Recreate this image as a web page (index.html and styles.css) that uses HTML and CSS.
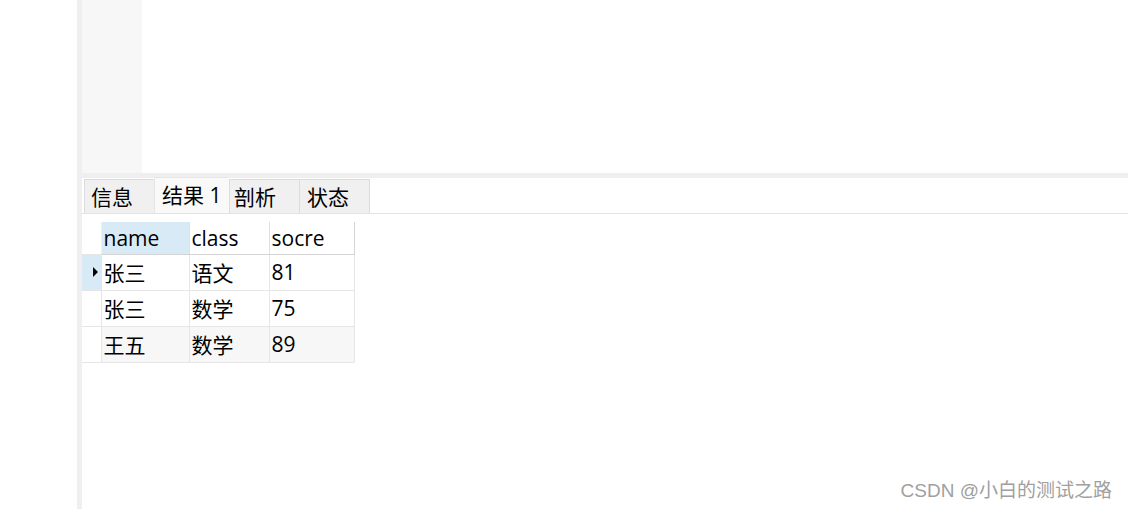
FILE: index.html
```html
<!DOCTYPE html>
<html lang="zh-CN">
<head>
<meta charset="utf-8">
<title>结果</title>
<link rel="stylesheet" href="styles.css">
</head>
<body>
<div class="app">
  <div class="blank"></div>
  <div class="divider"></div>
  <div class="main">
    <div class="editor">
      <div class="gutter"></div>
      <div class="code"></div>
    </div>
    <div class="band"></div>
    <div class="tabs">
      <div class="tab t1">信息</div>
      <div class="tab active t2">结果 1</div>
      <div class="tab t3">剖析</div>
      <div class="tab t4">状态</div>
    </div>
    <div class="results">
      <table class="grid">
        <thead>
          <tr><th class="ind"></th><th class="c1 sel">name</th><th class="c2">class</th><th class="c3">socre</th></tr>
        </thead>
        <tbody>
          <tr class="cur"><td class="ind"><span class="arrow"></span></td><td>张三</td><td>语文</td><td>81</td></tr>
          <tr><td class="ind"></td><td>张三</td><td>数学</td><td>75</td></tr>
          <tr class="alt"><td class="ind"></td><td>王五</td><td>数学</td><td>89</td></tr>
        </tbody>
      </table>
      <div class="watermark">CSDN @小白的测试之路</div>
    </div>
  </div>
</div>
</body>
</html>
```
FILE: styles.css
```css
* { box-sizing: border-box; }
html, body { margin: 0; padding: 0; background: #fff; }
body {
  font-family: "Open Sans", "Noto Sans CJK SC", sans-serif;
  color: #000;
  width: 1128px;
  height: 509px;
  overflow: hidden;
}
.app { display: flex; height: 509px; }
.blank { width: 77px; background: #fff; }
.divider { width: 5px; background: #efefef; }
.main { flex: 1; display: flex; flex-direction: column; }
.editor { height: 173px; display: flex; }
.gutter { width: 60px; background: #f7f7f7; }
.code { flex: 1; background: #fff; }
.band { height: 5px; background: #efefef; }
.tabs {
  height: 36px;
  display: flex;
  align-items: flex-end;
  padding-left: 2px;
  border-bottom: 1px solid #e3e3e3;
}
.tab {
  height: 34px;
  font-size: 21px;
  line-height: 34px;
  background: #f0f0f0;
  border: 1px solid #dcdcdc;
  border-bottom: none;
  border-right: none;
  white-space: nowrap;
}
.t1 { width: 70px; padding-left: 6px; }
.t2 { width: 75px; padding-left: 7px; }
.t3 { width: 70px; padding-left: 4px; }
.t4 { width: 71px; padding-left: 7px; border-right: 1px solid #dcdcdc; }
.tab.active { height: 36px; background: #f9f9f9; line-height: 34px; border-color: #e6e6e6; }
.results { flex: 1; position: relative; padding-top: 8px; }
.grid {
  border-collapse: collapse;
  font-size: 21px;
  table-layout: fixed;
}
.grid th, .grid td {
  padding: 0 0 0 2px;
  text-align: left;
  font-weight: normal;
  border-right: 1px solid #e6e6e6;
  border-bottom: 1px solid #e6e6e6;
  white-space: nowrap;
}
.grid th { height: 32px; border-bottom-color: #d4d4d4; border-right-color: #e0e0e0; }
.grid td { height: 36px; }
.grid .ind { width: 19px; padding: 0; border-right: 1px solid #e6e6e6; }
.grid th.ind { border-bottom-color: #e6e6e6; border-right-color: #f0f0f0; }
.grid .c1 { width: 88px; }
.grid .c2 { width: 80px; }
.grid .c3 { width: 85px; border-right-color: #d4d4d4; }
.grid th.sel { background: #d9eaf7; }
.grid tr.cur td.ind { background: #d9eaf7; }
.grid tr.alt td { background: #f7f7f7; }
.grid tr.alt td.ind { background: #fff; }
.arrow {
  display: block;
  width: 0; height: 0;
  margin-left: 11px;
  border-top: 5px solid transparent;
  border-bottom: 5px solid transparent;
  border-left: 5px solid #000;
}
.watermark {
  position: absolute;
  right: 16px;
  bottom: 7px;
  font-family: "Liberation Sans", "Noto Sans CJK SC", sans-serif;
  font-size: 19px;
  color: #a0a0a0;
  text-shadow: 0 0 1px #fff;
}
```
